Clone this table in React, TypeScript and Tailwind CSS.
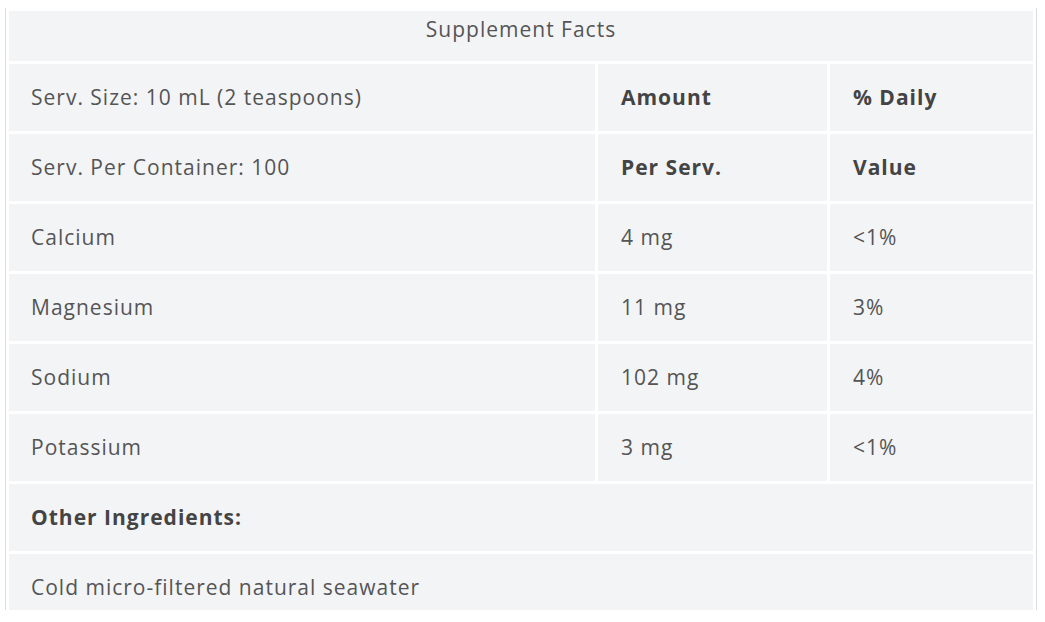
const rows = [
  { name: 'Calcium', amount: '4 mg', daily: '<1%' },
  { name: 'Magnesium', amount: '11 mg', daily: '3%' },
  { name: 'Sodium', amount: '102 mg', daily: '4%' },
  { name: 'Potassium', amount: '3 mg', daily: '<1%' },
];

const cell = 'bg-[#f3f4f6] px-[22px] align-middle';
const num = 'bg-[#f3f4f6] pl-[23px] pr-[22px] align-middle';

export default function App() {
  return (
    <div className="bg-white w-[1045px] h-[622px] pt-[8px] font-['Open_Sans',sans-serif] text-[21px] tracking-[1px] text-[#555]">
      <div className="ml-[5px] w-[1032px] h-[602px] overflow-hidden border-x border-[#dcdcdc]">
        <table className="w-full border-separate border-spacing-[3px] text-left">
          <tbody>
            <tr className="h-[50px]">
              <td colSpan={3} className="bg-[#f3f4f6] text-center pb-[12px]">
                Supplement Facts
              </td>
            </tr>
            <tr className="h-[67px]">
              <td className={cell}>Serv. Size: 10 mL (2 teaspoons)</td>
              <td className={`${num} w-[229px] font-bold text-[#444]`}>Amount</td>
              <td className={`${num} w-[203px] font-bold text-[#444]`}>% Daily</td>
            </tr>
            <tr className="h-[67px]">
              <td className={cell}>Serv. Per Container: 100</td>
              <td className={`${num} font-bold text-[#444]`}>Per Serv.</td>
              <td className={`${num} font-bold text-[#444]`}>Value</td>
            </tr>
            {rows.map((r) => (
              <tr key={r.name} className="h-[67px]">
                <td className={cell}>{r.name}</td>
                <td className={num}>{r.amount}</td>
                <td className={num}>{r.daily}</td>
              </tr>
            ))}
            <tr className="h-[67px]">
              <td colSpan={3} className={`${cell} font-bold text-[#444]`}>
                Other Ingredients:
              </td>
            </tr>
            <tr className="h-[67px]">
              <td colSpan={3} className={cell}>
                Cold micro-filtered natural seawater
              </td>
            </tr>
          </tbody>
        </table>
      </div>
    </div>
  );
}
